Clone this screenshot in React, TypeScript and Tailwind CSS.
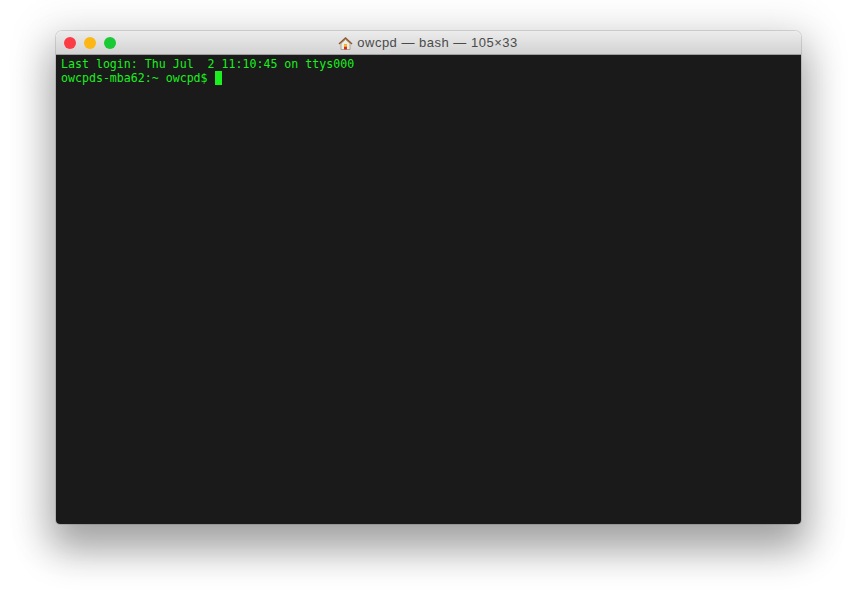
export default function App() {
  return (
    <div className="w-[857px] h-[604px] bg-white overflow-hidden pt-[31px] pl-[56px]">
      <div className="w-[745px] h-[493px] rounded-t-[6px] rounded-b-[4px] flex flex-col overflow-hidden shadow-[0_0_0_1px_rgba(0,0,0,0.12),0_22px_38px_4px_rgba(0,0,0,0.32),0_6px_40px_16px_rgba(0,0,0,0.07)]">
        <div className="h-[24px] shrink-0 relative flex items-center justify-center bg-gradient-to-b from-[#ececec] to-[#d3d3d3] border-b border-[#9f9f9f]">
          <div className="absolute left-[8px] top-[6px] flex gap-[8px]">
            <div className="w-[12px] h-[12px] rounded-full bg-[#fc3c44]" />
            <div className="w-[12px] h-[12px] rounded-full bg-[#fdb714]" />
            <div className="w-[12px] h-[12px] rounded-full bg-[#19c935]" />
          </div>
          <div className="flex items-center gap-[4px] pt-[1px] pr-[1px] text-[13px] leading-[16px] tracking-[0.5px] text-[#4a4a4a] font-['Liberation_Sans',Arial,sans-serif]">
            <svg width="15" height="15" viewBox="0 0 15 15">
              <path d="M3 7.5V13.5H12V7.5L7.5 3.5Z" fill="#f1ece2" stroke="#8f8a80" strokeWidth="0.7" />
              <path d="M1 8L7.5 2L14 8" fill="none" stroke="#8f5a2c" strokeWidth="1.6" />
              <rect x="6" y="8.5" width="3" height="5" fill="#d92b1e" />
              <rect x="6" y="8.5" width="3" height="2.2" fill="#f5c518" />
            </svg>
            <span className="whitespace-pre">owcpd — bash — 105×33</span>
          </div>
        </div>
        <div className="flex-1 bg-[#1a1a1a] pl-[5px] pt-[2px] text-[#19f01e] text-[11.6px] leading-[14px] font-['DejaVu_Sans_Mono','Liberation_Mono',monospace] whitespace-pre">
          <div>Last login: Thu Jul  2 11:10:45 on ttys000</div>
          <div className="flex items-center">
            <span>owcpds-mba62:~ owcpd$ </span>
            <span className="w-[7px] h-[14px] bg-[#19f01e]" />
          </div>
        </div>
      </div>
    </div>
  );
}
